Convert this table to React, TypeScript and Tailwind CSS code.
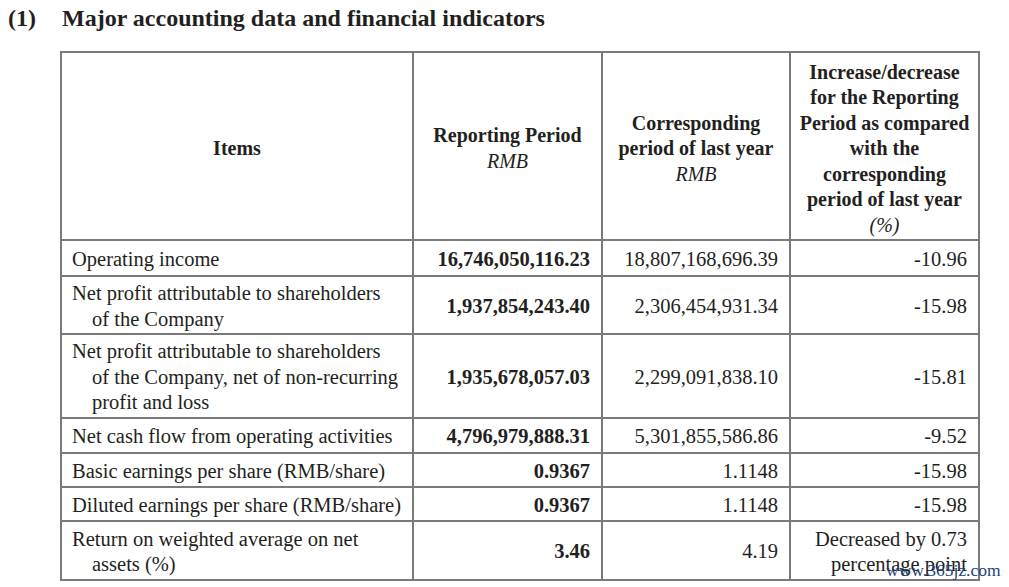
const ink = "text-[#231f20]";

type Row = {
  label: string[];
  current: string;
  last: string;
  change: string[];
  h: string;
};

const rows: Row[] = [
  { label: ["Operating income"], current: "16,746,050,116.23", last: "18,807,168,696.39", change: ["-10.96"], h: "h-[36px]" },
  {
    label: ["Net profit attributable to shareholders", "of the Company"],
    current: "1,937,854,243.40",
    last: "2,306,454,931.34",
    change: ["-15.98"],
    h: "h-[58px]",
  },
  {
    label: ["Net profit attributable to shareholders", "of the Company, net of non-recurring", "profit and loss"],
    current: "1,935,678,057.03",
    last: "2,299,091,838.10",
    change: ["-15.81"],
    h: "h-[84px]",
  },
  { label: ["Net cash flow from operating activities"], current: "4,796,979,888.31", last: "5,301,855,586.86", change: ["-9.52"], h: "h-[35px]" },
  { label: ["Basic earnings per share (RMB/share)"], current: "0.9367", last: "1.1148", change: ["-15.98"], h: "h-[34px]" },
  { label: ["Diluted earnings per share (RMB/share)"], current: "0.9367", last: "1.1148", change: ["-15.98"], h: "h-[34px]" },
  {
    label: ["Return on weighted average on net", "assets (%)"],
    current: "3.46",
    last: "4.19",
    change: ["Decreased by 0.73", "percentage point"],
    h: "h-[59px]",
  },
];

const cell = "border-2 border-[#7a7a7a] align-middle";

export default function App() {
  return (
    <div className={`relative h-[587px] w-[1009px] overflow-hidden bg-white ${ink}`} style={{ fontFamily: '"Liberation Serif", "Times New Roman", serif' }}>
      <div className="flex h-[36px] items-center text-[24px] font-bold leading-none">
        <span className="w-[62px] pl-[8px]">(1)</span>
        <span>Major accounting data and financial indicators</span>
      </div>

      <table className="ml-[60px] mt-[15px] w-[918px] table-fixed border-collapse text-[20.5px] leading-[25.5px]">
        <colgroup>
          <col className="w-[352px]" />
          <col className="w-[189px]" />
          <col className="w-[188px]" />
          <col className="w-[189px]" />
        </colgroup>
        <thead>
          <tr className="h-[188px] text-[20px] font-bold">
            <th className={`${cell} pt-[6px] text-center`}>Items</th>
            <th className={`${cell} pt-[5px] text-center`}>
              <div>Reporting Period</div>
              <div className="font-normal italic">RMB</div>
            </th>
            <th className={`${cell} pt-[6px] text-center`}>
              <div>Corresponding</div>
              <div>period of last year</div>
              <div className="font-normal italic">RMB</div>
            </th>
            <th className={`${cell} pt-[6px] text-center`}>
              <div>Increase/decrease</div>
              <div>for the Reporting</div>
              <div>Period as compared</div>
              <div>with the</div>
              <div>corresponding</div>
              <div>period of last year</div>
              <div className="font-normal italic">(%)</div>
            </th>
          </tr>
        </thead>
        <tbody>
          {rows.map((r, i) => (
            <tr key={i} className={r.h}>
              <td className={`${cell} pl-[10px] pt-[3px]`}>
                {r.label.map((l, j) => (
                  <div key={j} className={j > 0 ? "pl-[20px]" : ""}>
                    {l}
                  </div>
                ))}
              </td>
              <td className={`${cell} pr-[11px] pt-[3px] text-right font-bold`}>{r.current}</td>
              <td className={`${cell} pr-[11px] pt-[3px] text-right`}>{r.last}</td>
              <td className={`${cell} pr-[11px] pt-[3px] text-right`}>
                {r.change.map((c, j) => (
                  <div key={j}>{c}</div>
                ))}
              </td>
            </tr>
          ))}
        </tbody>
      </table>

      <div className="absolute left-[886px] top-[562px] text-[17.5px] leading-none text-[#1d3f78]">www.365jz.com</div>
    </div>
  );
}
